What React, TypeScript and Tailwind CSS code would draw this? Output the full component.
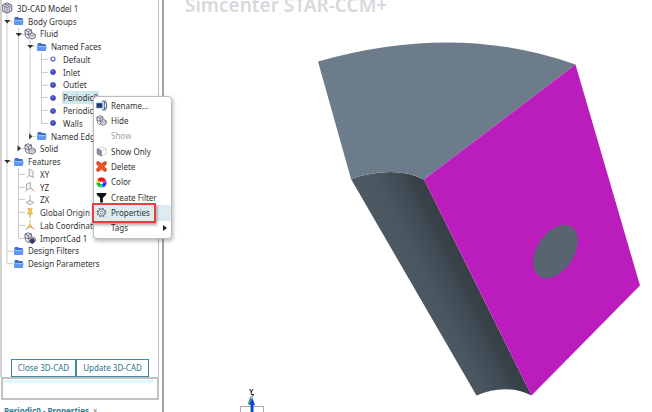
import type { ReactNode } from 'react'

type IconName = 'cube' | 'cubes' | 'folder' | 'dot' | 'ring' | 'xy' | 'yz' | 'zx' | 'pin' | 'axes' | 'import'

type Row = { guides: string; icon: IconName; label: string; selected?: boolean }

// guides: one character per indent column
//   | line, + tee, L elbow, v open branch, x closed branch (last)
const rows: Row[] = [
  { guides: '', icon: 'cube', label: '3D-CAD Model 1' },
  { guides: 'v', icon: 'folder', label: 'Body Groups' },
  { guides: '|v', icon: 'cubes', label: 'Fluid' },
  { guides: '||v', icon: 'folder', label: 'Named Faces' },
  { guides: '|||+', icon: 'ring', label: 'Default' },
  { guides: '|||+', icon: 'dot', label: 'Inlet' },
  { guides: '|||+', icon: 'dot', label: 'Outlet' },
  { guides: '|||+', icon: 'dot', label: 'Periodic0', selected: true },
  { guides: '|||+', icon: 'dot', label: 'Periodic1' },
  { guides: '|||L', icon: 'dot', label: 'Walls' },
  { guides: '||x', icon: 'folder', label: 'Named Edges' },
  { guides: '|x', icon: 'cubes', label: 'Solid' },
  { guides: 'v', icon: 'folder', label: 'Features' },
  { guides: '|+', icon: 'xy', label: 'XY' },
  { guides: '|+', icon: 'yz', label: 'YZ' },
  { guides: '|+', icon: 'zx', label: 'ZX' },
  { guides: '|+', icon: 'pin', label: 'Global Origin' },
  { guides: '|+', icon: 'axes', label: 'Lab Coordinate' },
  { guides: '|L', icon: 'import', label: 'ImportCad 1' },
  { guides: '+', icon: 'folder', label: 'Design Filters' },
  { guides: 'L', icon: 'folder', label: 'Design Parameters' },
]

function Guide({ kind, wide }: { kind: string; wide: boolean }) {
  const ends = kind === 'L' || kind === 'x'
  return (
    <svg viewBox="0 0 12 13" preserveAspectRatio="none" className={wide ? 'h-full w-3 shrink-0' : 'h-full w-[11px] shrink-0'}>
      <path d={ends ? 'M5.5 0V6.5' : 'M5.5 0V13'} stroke="#c9c9c9" />
      {kind !== '|' && <path d="M5.5 6.5H12" stroke="#c9c9c9" />}
      {kind === 'v' && <path d="M2.5 5H9L5.7 8.6Z" fill="#333" />}
      {kind === 'x' && <path d="M4.5 3.2V9.8L8 6.5Z" fill="#333" />}
    </svg>
  )
}

function Cube() {
  return (
    <>
      <path d="M6 .8 10.8 3.2V8.8L6 11.3 1.2 8.8V3.2Z" fill="#dcdce6" stroke="#66667c" strokeWidth="1" />
      <path d="M1.2 3.2 6 5.8 10.8 3.2M6 5.8V11.3M3.5 2 8.3 4.5V10M8.5 2 3.7 4.5V10" fill="none" stroke="#77778c" strokeWidth=".8" />
    </>
  )
}

function Cubes() {
  return (
    <>
      <path d="M4 .8 7.5 2V5L4.5 7 1 5.5V2.2Z" fill="#e8e8ee" stroke="#66667a" strokeWidth=".9" />
      <path d="M1 2.2 4.4 3.7 7.5 2M4.4 3.7V7M1 5.5 2 9 5 11" fill="none" stroke="#66667a" strokeWidth=".9" />
      <path d="M5 6.2 8.3 4.7 11.3 6.5V9.3L8 11.3 5 9.8Z" fill="#d6d6de" stroke="#66667a" strokeWidth=".9" />
      <path d="M5 6.2 8 7.8 11.3 6.5" fill="none" stroke="#88889a" strokeWidth=".7" />
    </>
  )
}

const drawings: Record<IconName, ReactNode> = {
  cube: <Cube />,
  cubes: <Cubes />,
  folder: (
    <>
      <path d="M2.5 3Q2.5 2 3.5 2H6L7 3H10Q10.8 3 10.8 4V9.5H2.5Z" fill="#3a6fd0" />
      <path d="M2.8 5H11Q11.6 5 11.5 5.8L11 9.3Q10.8 10 10 10H3.2Q2.4 10 2.3 9.3L1.9 5.8Q1.8 5 2.8 5Z" fill="#5c97ef" />
      <path d="M3 5.6H10.5" stroke="#b5d2fb" strokeWidth=".8" />
    </>
  ),
  dot: (
    <>
      <circle cx="6" cy="6" r="2.5" fill="#4450d0" stroke="#2b35a8" strokeWidth=".7" />
      <circle cx="5.3" cy="5.2" r=".8" fill="#8d96f2" />
    </>
  ),
  ring: <circle cx="6" cy="6" r="2" fill="#fff" stroke="#4a58c8" strokeWidth="1.1" />,
  xy: (
    <>
      <path d="M5 1 9 3V9L5 7.5Z" fill="#f2f2f2" stroke="#9a9aa2" strokeWidth=".8" />
      <path d="M5 7.5 2 10" stroke="#e09a9a" strokeWidth=".9" />
      <path d="M5 7.5 10.5 10" stroke="#a3aee6" strokeWidth=".9" />
    </>
  ),
  yz: (
    <>
      <path d="M2.5 3 6.5 1.5V7L2.5 9Z" fill="#f2f2f2" stroke="#9a9aa2" strokeWidth=".8" />
      <path d="M6.5 7 10.5 10" stroke="#e07a7a" strokeWidth="1" />
      <path d="M2.5 9 1.5 10.5" stroke="#9a9aa2" strokeWidth=".8" />
    </>
  ),
  zx: (
    <>
      <path d="M6 6.5 10 8.5 6 10.8 2 8.5Z" fill="#f2f2f2" stroke="#9a9aa2" strokeWidth=".8" />
      <path d="M6 1V7" stroke="#8fc097" strokeWidth="1" />
    </>
  ),
  pin: (
    <>
      <path d="M3.8 1.3H8.2V2.3L7.5 2.8V5.5L9 7H3L4.5 5.5V2.8L3.8 2.3Z" fill="#f3c562" stroke="#d39b33" strokeWidth=".5" />
      <path d="M6 7V11" stroke="#b98f45" strokeWidth=".9" />
    </>
  ),
  axes: (
    <>
      <path d="M6 1V7.5" stroke="#b9c87c" strokeWidth="1" />
      <path d="M6 5 9 8.7H3Z" fill="#f0b53a" />
      <path d="M5 8 1.5 10.5" stroke="#8ea2e6" strokeWidth="1" />
      <path d="M7 8 10.5 10.3" stroke="#e8806f" strokeWidth="1" />
    </>
  ),
  import: (
    <>
      <Cubes />
      <path d="M6.5 6.5H10V8.5H12L8.300 12 4.700 8.500H6.500Z" fill="#2e3a58" />
    </>
  ),
}

function TreeRow({ row }: { row: Row }) {
  return (
    <li className="flex min-h-0 flex-1 items-center">
      {row.guides.split('').map((g, i) => (
        <Guide key={i} kind={g} wide={i % 2 === 1} />
      ))}
      <svg viewBox="0 0 12 12" className="-ml-px h-3 w-3 shrink-0">{drawings[row.icon]}</svg>
      <span className={row.selected ? 'ml-[3px] bg-[#cfe9ee] px-px leading-[13px]' : 'ml-[3px] px-px leading-[13px]'}>{row.label}</span>
    </li>
  )
}

const menu: { label: string; icon?: ReactNode; disabled?: boolean; active?: boolean; submenu?: boolean }[] = [
  {
    label: 'Rename...',
    icon: (
      <>
        <path d="M.5 3.3H7V8.7H.5Z" fill="#223a66" stroke="#7d92b8" strokeWidth=".8" />
        <path d="M6.5 1.2H9V10.8H6.5M9 3H11.4V9H9M9 1.2H10.8M9 10.8H10.8" fill="none" stroke="#33507f" strokeWidth="1" />
      </>
    ),
  },
  { label: 'Hide', icon: <Cubes /> },
  { label: 'Show', disabled: true },
  {
    label: 'Show Only',
    icon: (
      <>
        <path d="M6 1 10.8 3V8.8L6 11 1.5 8.8V3Z" fill="#fff" stroke="#bdbdc8" strokeWidth=".8" />
        <path d="M6 5V11M6 5 10.8 3" stroke="#c8c8d0" strokeWidth=".7" />
        <path d="M1.3 2.8 5.8 5V11L1.3 8.7Z" fill="#8d8da0" stroke="#6f6f84" strokeWidth=".6" />
      </>
    ),
  },
  {
    label: 'Delete',
    icon: <path d="M1 1H3.5L6 3.5 8.5 1H11V3.5L8.7 6 11 8.5V11H8.5L6 8.5 3.5 11H1V8.5L3.3 6 1 3.5Z" fill="#f6551d" stroke="#b81d10" strokeWidth=".9" />,
  },
  {
    // hue wheel: red on top, blue lower right, green lower left
    label: 'Color',
    icon: (
      <>
        <path d="M6 6 1.2 3.2A5.5 5.5 0 0 1 10.8 3.2Z" fill="#f51818" />
        <path d="M6 6 10.8 3.2A5.5 5.5 0 0 1 11.5 6Z" fill="#d020e0" />
        <path d="M6 6H11.500A5.500 5.500 0 0 1 7.500 11.300Z" fill="#1738f0" />
        <path d="M6 6 7.500 11.300A5.500 5.500 0 0 1 4.500 11.300Z" fill="#12c6e0" />
        <path d="M6 6 4.500 11.300A5.500 5.500 0 0 1 .5 6Z" fill="#0bbd35" />
        <path d="M6 6H.5A5.500 5.500 0 0 1 1.200 3.200Z" fill="#f2d500" />
        <path d="M6 4 8 7.5H4Z" fill="#fff" />
      </>
    ),
  },
  { label: 'Create Filter', icon: <path d="M.8 1H11.2V3L7.5 6.5V11.5H4.5V6.5L.8 3Z" fill="#111" /> },
  {
    label: 'Properties',
    active: true,
    icon: (
      <>
        <circle cx="6" cy="6" r="4.5" fill="none" stroke="#6d7884" strokeWidth="1.6" strokeDasharray="2 1.53" />
        <circle cx="6" cy="6" r="3.6" fill="#dfe8ec" stroke="#6d7884" strokeWidth=".9" />
        <circle cx="6" cy="6" r="1.5" fill="#fff" stroke="#6d7884" strokeWidth=".9" />
      </>
    ),
  },
  { label: 'Tags', submenu: true },
]

function ContextMenu() {
  return (
    <div role="menu" className="absolute top-24 left-[93px] flex h-[143px] w-[79px] flex-col rounded-sm border border-[#b9bdc0] bg-white pt-px pb-[2px] shadow-[1px_2px_4px_rgba(0,0,0,0.3)]">
      {menu.map((item) => (
        <button
          key={item.label}
          role="menuitem"
          disabled={item.disabled}
          className={
            item.active
              ? 'relative flex min-h-0 flex-1 items-center bg-[#dcecf0] text-left'
              : 'flex min-h-0 flex-1 items-center text-left disabled:text-[#a4a4a4]'
          }
        >
          <svg viewBox="0 0 12 12" className="ml-[2px] h-[11px] w-[11px] shrink-0">{item.icon}</svg>
          <span className="ml-1 flex-1 whitespace-nowrap">{item.label}</span>
          {item.submenu && (
            <svg viewBox="0 0 4 6" className="mr-1 h-[6px] w-1"><path d="M0 0 4 3 0 6Z" fill="#222" /></svg>
          )}
          {item.active && (
            <span className="absolute -inset-y-[2px] -left-[2px] w-[64px] border-2 border-[#e5403f] shadow-[1px_2px_3px_rgba(0,0,0,0.35)]" />
          )}
        </button>
      ))}
    </div>
  )
}

function Model() {
  return (
    <svg viewBox="164 0 488 412" preserveAspectRatio="xMinYMin meet" className="h-full w-full">
      <defs>
        <linearGradient id="bore" gradientUnits="userSpaceOnUse" x1="383" y1="262" x2="449" y2="229">
          <stop offset="0" stopColor="#4d5963" />
          <stop offset=".4" stopColor="#4a5660" />
          <stop offset=".65" stopColor="#424e57" />
          <stop offset=".88" stopColor="#384148" />
          <stop offset="1" stopColor="#374046" />
        </linearGradient>
      </defs>
      <path d="M351 179Q394 165 424 179.5L531.5 395.5Q506 383 476.5 395.5Z" fill="url(#bore)" />
      <path d="M318 61.5Q456 22 575.5 64.5L424 179.5Q394 165 351 179Z" fill="#6d7c8a" />
      <path d="M575.5 64.5 640 285.5 531.5 395.5 424 179.5Z" fill="#bb1dbd" />
      <ellipse cx="555.5" cy="251.5" rx="29.5" ry="18.5" transform="rotate(-57 555.5 251.5)" fill="#586571" />
      <g>
        <path d="M240.5 412V406.5H263.5V412" fill="none" stroke="#aaa" />
        <path d="M250.5 397 248.5 404H251V412" fill="#2c9c36" stroke="#2c9c36" />
        <path d="M252 397 255 405H253.5V412H251V405H249.5Z" fill="#1140e8" />
        <text x="249" y="394" className="fill-[#222] font-['Noto_Sans'] text-[7px] font-bold">Y</text>
        <path d="M251 394.5H254L251.5 397" fill="none" stroke="#333" />
      </g>
    </svg>
  )
}

function App() {
  return (
    <div className="relative flex h-screen overflow-hidden bg-white font-['Noto_Sans',sans-serif] text-[8px] leading-3 text-[#333]">
      <aside className="flex w-[164px] shrink-0 flex-col border-r-2 border-[#a3a3a3]">
        <div className="mr-[3px] flex flex-1 flex-col border-r border-l-2 border-r-[#bcbcbc] border-l-[#d2d2d2]">
          <ul className="mt-[2px] flex h-[268px] flex-col overflow-hidden whitespace-nowrap">
            {rows.map((row) => (
              <TreeRow key={row.label} row={row} />
            ))}
          </ul>
          <div className="mt-auto flex pl-[9px] text-[#2d7390]">
            <button className="h-[18px] w-[65px] border border-[#4189a3] whitespace-nowrap">Close 3D-CAD</button>
            <button className="h-[18px] w-[73px] border border-[#4189a3] whitespace-nowrap">Update 3D-CAD</button>
          </div>
        </div>
        <div className="mr-[3px] ml-px h-[23px] border-2 border-[#c2c2c2] px-px pt-px">
          <div className="mr-[3px] h-[3px] bg-[#def6fc]" />
        </div>
        <div className="flex h-3 gap-1 pt-[5px] pl-1 font-bold whitespace-nowrap text-[#2b7b93]">
          <span>Periodic0 - Properties</span>
          <span className="font-normal text-[#777]">×</span>
        </div>
      </aside>

      <main className="relative min-w-0 flex-1">
        <Model />
        <h1 className="absolute -top-[7px] left-[21px] text-[19px] leading-6 font-semibold whitespace-nowrap text-[#d6d9dd]">Simcenter STAR-CCM+</h1>
      </main>

      <ContextMenu />
    </div>
  )
}

export default App
